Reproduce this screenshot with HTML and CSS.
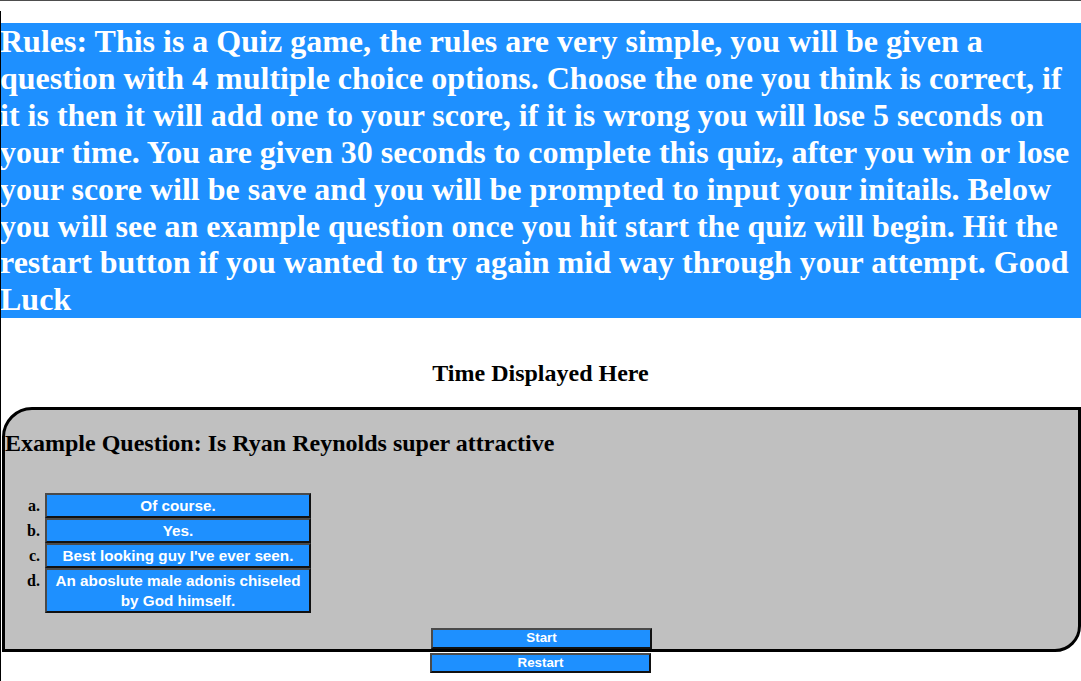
FILE: index.html
```html
<!DOCTYPE html>
<html lang="en">
<head>
<meta charset="utf-8">
<title>Quiz</title>
<link rel="stylesheet" href="styles.css">
</head>
<body>
<header class="rules">
  <h1 class="rules-text">Rules: This is a Quiz game, the rules are very simple, you will be given a question with 4 multiple choice options. Choose the one you think is correct, if it is then it will add one to your score, if it is wrong you will lose 5 seconds on your time. You are given 30 seconds to complete this quiz, after you win or lose your score will be save and you will be prompted to input your initails. Below you will see an example question once you hit start the quiz will begin. Hit the restart button if you wanted to try again mid way through your attempt. Good Luck</h1>
</header>
<h2 class="timer">Time Displayed Here</h2>
<main class="quiz-box">
  <h2 class="question">Example Question: Is Ryan Reynolds super attractive</h2>
  <ol class="options">
    <li class="option"><span class="label">a.</span><button class="opt-btn">Of course.</button></li>
    <li class="option"><span class="label">b.</span><button class="opt-btn">Yes.</button></li>
    <li class="option"><span class="label">c.</span><button class="opt-btn">Best looking guy I've ever seen.</button></li>
    <li class="option"><span class="label">d.</span><button class="opt-btn">An aboslute male adonis chiseled by God himself.</button></li>
  </ol>
  <div class="controls"><button class="ctl-btn">Start</button></div>
</main>
<div class="controls after-box"><button class="ctl-btn">Restart</button></div>
</body>
</html>
```
FILE: styles.css
```css
html {
  border-top: 1px solid #4d4d4d;
  background: #fff;
}
body {
  margin: 0;
  font-family: "Liberation Serif", "Times New Roman", serif;
  color: #000;
  position: relative;
  min-height: 680px;
}
body::before {
  content: "";
  position: absolute;
  left: 0;
  top: 10px;
  bottom: 0;
  width: 1px;
  background: #000;
}
.rules {
  margin-top: 22px;
  background: #1e90ff;
}
.rules-text {
  margin: 0;
  font-size: 32px;
  line-height: 36.9px;
  font-weight: bold;
  color: #fff;
}
.timer {
  margin: 42px 0 0;
  font-size: 24px;
  line-height: 27.6px;
  text-align: center;
  font-weight: bold;
}
.quiz-box {
  display: block;
  margin: 19px 0 0 2px;
  background: #c0c0c0;
  border: 3px solid #000;
  border-radius: 30px 0 26px 0;
}
.question {
  margin: 20px 0 0;
  font-size: 24px;
  line-height: 27.6px;
  font-weight: bold;
}
.options {
  list-style: none;
  margin: 36px 0 0;
  padding: 0;
  display: flex;
  flex-direction: column;
  gap: 0;
}
.option {
  display: flex;
  align-items: flex-start;
}
.label {
  width: 35px;
  text-align: right;
  padding-right: 5px;
  font-size: 16px;
  font-weight: bold;
  line-height: 25px;
}
.opt-btn {
  width: 266px;
  margin: 0;
  padding: 1px 6px 0;
  background: #1e90ff;
  color: #fff;
  font-family: "Liberation Sans", Arial, sans-serif;
  font-size: 15.25px;
  font-weight: bold;
  line-height: 20px;
  border: 2px solid #111;
  border-top-color: #4a4a4a;
  border-left-color: #4a4a4a;
  text-align: center;
}
.controls {
  display: flex;
  justify-content: center;
}
.quiz-box .controls {
  margin-top: 15px;
}
.ctl-btn {
  width: 221px;
  margin: 0;
  padding: 0;
  background: #1e90ff;
  color: #fff;
  font-family: "Liberation Sans", Arial, sans-serif;
  font-size: 13.333px;
  font-weight: bold;
  line-height: 16.5px;
  border: 2px solid #111;
  border-top-color: #4a4a4a;
  border-left-color: #4a4a4a;
}
.after-box {
  margin-top: 1px;
}
```
